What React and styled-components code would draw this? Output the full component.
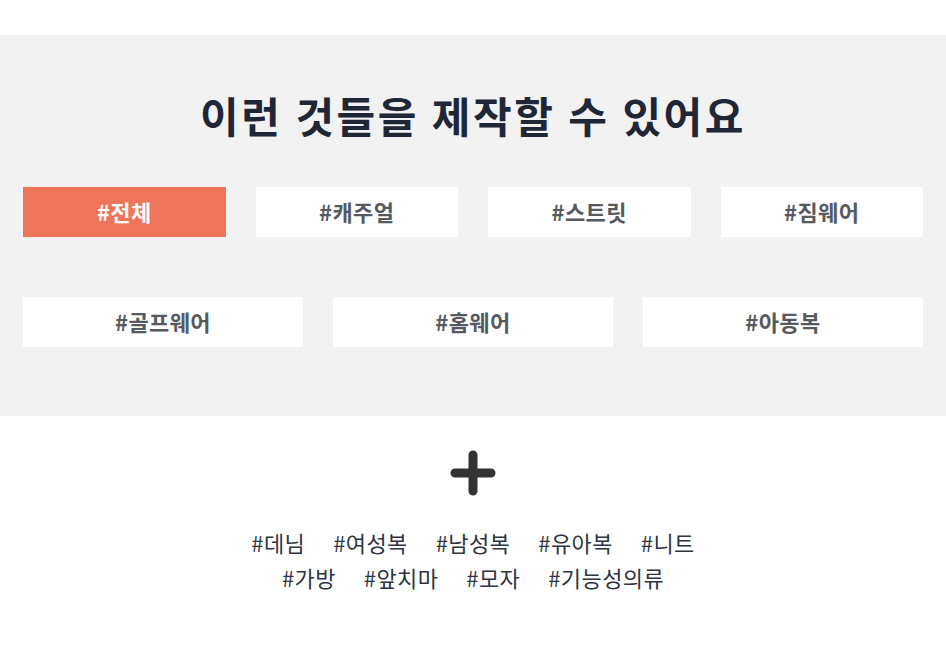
import React, { useState } from "react";
import styled, { createGlobalStyle } from "styled-components";

const Global = createGlobalStyle`
  html, body { margin: 0; padding: 0; background: #ffffff; }
  body { font-family: "Noto Sans CJK KR", "Noto Sans", sans-serif; }
  * { box-sizing: border-box; }
`;

const Page = styled.div`
  width: 946px;
  padding-top: 35px;
  padding-bottom: 60px;
`;

const GraySection = styled.section`
  background: #f2f2f2;
  padding: 50px 23px 69px;
`;

const Title = styled.h2`
  margin: 0;
  text-align: center;
  font-size: 42px;
  line-height: 60px;
  font-weight: 700;
  letter-spacing: 2.5px;
  word-spacing: 1px;
  color: #1f2636;
`;

const Grid = styled.div`
  display: grid;
  grid-template-columns: repeat(${(p) => p.$cols}, 1fr);
  column-gap: 30px;
  margin-top: ${(p) => p.$top}px;
`;

const TagButton = styled.button`
  height: 50px;
  border: none;
  margin: 0;
  padding: 0 0 3px;
  background: ${(p) => (p.$active ? "#ee7559" : "#ffffff")};
  color: ${(p) => (p.$active ? "#ffffff" : "#555a60")};
  font-family: inherit;
  font-size: 22px;
  font-weight: 700;
  letter-spacing: 0.4px;
  cursor: pointer;
`;

const PlusWrap = styled.div`
  display: flex;
  justify-content: center;
  margin-top: 34px;
`;

const TagLines = styled.div`
  margin-top: 29px;
  display: flex;
  flex-direction: column;
  align-items: center;
`;

const TagLine = styled.div`
  display: flex;
  gap: 28px;
  line-height: 35px;
`;

const Tag = styled.span`
  font-size: 22px;
  font-weight: 400;
  letter-spacing: 0.4px;
  color: #2d3443;
`;

const row1 = ["#전체", "#캐주얼", "#스트릿", "#짐웨어"];
const row2 = ["#골프웨어", "#홈웨어", "#아동복"];
const extra1 = ["#데님", "#여성복", "#남성복", "#유아복", "#니트"];
const extra2 = ["#가방", "#앞치마", "#모자", "#기능성의류"];

export default function App() {
  const [active, setActive] = useState("#전체");
  return (
    <Page>
      <Global />
      <GraySection>
        <Title>이런 것들을 제작할 수 있어요</Title>
        <Grid $cols={4} $top={42}>
          {row1.map((t) => (
            <TagButton key={t} $active={active === t} onClick={() => setActive(t)}>
              {t}
            </TagButton>
          ))}
        </Grid>
        <Grid $cols={3} $top={60}>
          {row2.map((t) => (
            <TagButton key={t} $active={active === t} onClick={() => setActive(t)}>
              {t}
            </TagButton>
          ))}
        </Grid>
      </GraySection>
      <PlusWrap>
        <svg width="46" height="46" viewBox="0 0 46 46">
          <path d="M23 5 V41 M5 23 H41" stroke="#333333" strokeWidth="9" strokeLinecap="round" />
        </svg>
      </PlusWrap>
      <TagLines>
        <TagLine>
          {extra1.map((t) => (
            <Tag key={t}>{t}</Tag>
          ))}
        </TagLine>
        <TagLine>
          {extra2.map((t) => (
            <Tag key={t}>{t}</Tag>
          ))}
        </TagLine>
      </TagLines>
    </Page>
  );
}
